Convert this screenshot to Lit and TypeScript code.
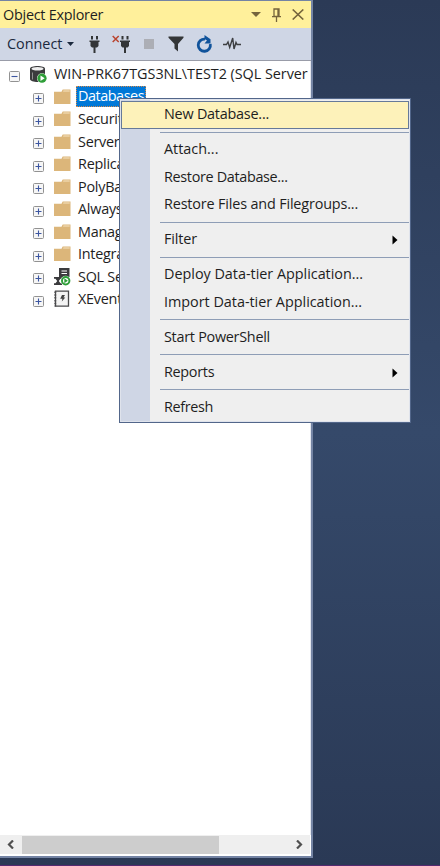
import { LitElement, html, svg, css, nothing } from "lit";
import { customElement } from "lit/decorators.js";
import { styleMap } from "lit/directives/style-map.js";

type Item = { label: string; tracking: number; arrow?: boolean; active?: boolean };

const groups: Item[][] = [
  [{ label: "New Database...", tracking: -0.23, active: true }],
  [
    { label: "Attach...", tracking: 0 },
    { label: "Restore Database...", tracking: -0.33 },
    { label: "Restore Files and Filegroups...", tracking: -0.16 },
  ],
  [{ label: "Filter", tracking: -0.12, arrow: true }],
  [
    { label: "Deploy Data-tier Application...", tracking: -0.02 },
    { label: "Import Data-tier Application...", tracking: -0.02 },
  ],
  [{ label: "Start PowerShell", tracking: -0.27 }],
  [{ label: "Reports", tracking: -0.3, arrow: true }],
  [{ label: "Refresh", tracking: -0.35 }],
];

const nodes = [
  { label: "Databases", icon: "folder", selected: true },
  { label: "Security", icon: "folder" },
  { label: "Server", icon: "folder" },
  { label: "Replica", icon: "folder" },
  { label: "PolyBa", icon: "folder" },
  { label: "Always", icon: "folder" },
  { label: "Manag", icon: "folder" },
  { label: "Integra", icon: "folder" },
  { label: "SQL Se", icon: "agent" },
  { label: "XEvent", icon: "xevent" },
];

const plugShape = svg`<path fill="#333537" d="M2 0h2v3.500H2zM7 0h2v3.500H7zM.5 4.500h10v1.500h-1v4L8 11.500H6.500V17h-2v-5.500H3L1.500 10V6h-1z"/>`;

const icons: Record<string, unknown> = {
  folder: html`<svg width="18" height="16" viewBox="0 0 18 16"><path fill="#dcb67a" d="M0 2.800h7.500l1.200-2.300h7.800v14.500H0z"/><path fill="#f6e3c2" d="M9.500 1.500h6.200v1H9z"/></svg>`,
  agent: html`<svg width="18" height="18" viewBox="0 0 18 18"><path fill="#3b3b3d" d="M5 0h10.500v9H5z"/><path stroke="#fff" stroke-width="1.200" d="M7.500 3h5.500M7.500 5.500h5.500"/><path fill="#3b3b3d" d="M0 9h8v1.800H6.500L4.800 13l1.700 2.200H8V17H0v-1.800h1.500L3.200 13 1.500 10.800H0z"/><circle cx="11.700" cy="12.700" r="5" fill="#fff"/><circle cx="11.700" cy="12.700" r="3.700" fill="#fff" stroke="#2e9e38" stroke-width="2"/><path fill="#2e9e38" d="M10.300 10.200l3.600 2.500-3.600 2.500z"/></svg>`,
  xevent: html`<svg width="18" height="18" viewBox="0 0 18 18"><path fill="#f4f4f4" stroke="#4a4a4c" stroke-width="1.300" d="M1.500 1.200h13v15h-13z"/><path stroke="#4a4a4c" stroke-width="1.800" stroke-dasharray="1.500 1.300" d="M1.300 1.500v15"/><path fill="#444" d="M8 5h3L9.500 7.500h1.800L7.800 11.500l.6-2.800H6.200z"/></svg>`,
  server: html`<svg width="18" height="19" viewBox="0 0 18 19"><path fill="#3b3b3d" d="M0 3.800C0 .2 15 .2 15 3.800V14c0 4-15 4-15 0z"/><ellipse cx="7.500" cy="3.800" rx="6" ry="1.800" fill="#eee"/><path fill="none" stroke="#aaa" stroke-width=".8" d="M2.500 7.500v7"/><circle cx="12" cy="13.200" r="5" fill="#fff"/><circle cx="12" cy="13.200" r="4.600" fill="#2e9e38"/><path fill="#fff" d="M10.500 10.500l4.200 2.700-4.200 2.700z"/></svg>`,
  connect: html`<svg width="11" height="17" viewBox="0 0 11 17">${plugShape}</svg>`,
  disconnect: html`<svg width="19" height="18" viewBox="0 0 19 18"><path stroke="#b9442f" stroke-width="1.500" d="M.7 1l6 6M6.700 1l-6 6"/><g transform="translate(7.500 1)">${plugShape}</g></svg>`,
  stop: html`<svg width="10" height="10"><path fill="#acaeb5" d="M0 0h10v10H0z"/></svg>`,
  filter: html`<svg width="16" height="16" viewBox="0 0 16 16"><path fill="#333537" d="M.5.500h15v1.200L10 8v7.500L6.500 12.500V8L.5 1.700z"/></svg>`,
  refresh: html`<svg width="17" height="18" viewBox="0 0 17 18"><path fill="none" stroke="#10539b" stroke-width="2.800" d="M9 4.100A6.100 6.100 0 1 0 14.300 9"/><path fill="#10539b" d="M8.500 0l6 4.300v4.200H8.500l2.500-3-2.500-1.500z"/></svg>`,
  activity: html`<svg width="18" height="14" viewBox="0 0 18 14"><path fill="none" stroke="#3d3f42" stroke-width="1.400" d="M0 7.500h3.500L5 5l1.700 5.500L9.700 1l1.300 11L13 5.500l1 2h4"/></svg>`,
};

const box = (open: boolean) => html`<svg class="box" width="11" height="11" viewBox="0 0 11 11">
  <rect x=".5" y=".5" width="10" height="10" rx="1" fill="#f6f6f6" stroke="#929292" />
  <path stroke="#3c56a0" stroke-width="1.100" d=${open ? "M2.500 5.500h6" : "M2.500 5.500h6M5.500 2.500v6"} />
</svg>`;

@customElement("context-menu")
export class ContextMenu extends LitElement {
  static styles = css`
    :host { display: block; box-sizing: border-box; width: 292px; height: 325px; border: 1px solid #52668a;
      background: linear-gradient(90deg, #cfd6e5 0 30px, #efefef 30px); padding: 2px 1px 0 1px;
      box-shadow: inset 0 0 0 1px #dfe3ec; }
    .item { display: flex; align-items: center; box-sizing: border-box; height: 27.500px; padding: 0 10px 1px 42px; white-space: nowrap; border: 1px solid transparent; }
    .active { background: #fdf2ba; border-color: #667a99; }
    .sep { height: 7.500px; display: flex; align-items: center; padding-left: 39px; }
    .line { height: 1px; flex: 1; background: #8e9db6; }
    .arrow { margin-left: auto; width: 6px; height: 10px; fill: #000; position: relative; top: 1px; }
  `;
  render() {
    return groups.map((g, i) => html`
      ${i ? html`<div class="sep"><div class="line"></div></div>` : nothing}
      ${g.map((it) => html`<div class="item ${it.active ? "active" : ""}">
        <span style=${styleMap({ letterSpacing: `${it.tracking}px` })}>${it.label}</span>
        ${it.arrow ? html`<svg class="arrow" viewBox="0 0 6 10"><path d="M.5.500L5.500 5 .5 9.500z" /></svg>` : nothing}
      </div>`)}`);
  }
}

@customElement("app-root")
export class AppRoot extends LitElement {
  static styles = css`
    :host { display: block; position: relative; box-sizing: border-box; width: 440px; height: 866px; overflow: hidden;
      font: 14.400px/20px "Open Sans", "Noto Sans", sans-serif; letter-spacing: -0.25px; color: #1e1e1e;
      background: linear-gradient(180deg, #2b3a56 0, #35496a 50%, #2a3955 100%); border-bottom: 1px solid #55296f; }
    .panel { box-sizing: border-box; width: 313px; height: 858px; display: flex; flex-direction: column; background: #fff;
      border: solid #7484a4; border-width: 1px 2px 2px 0; }
    .title { flex: none; height: 27px; display: flex; align-items: center; background: #fff09b; padding: 0 7px 0 3px; box-sizing: border-box; }
    .buttons { margin-left: auto; display: flex; align-items: center; gap: 11px; }
    .tools { flex: none; box-sizing: border-box; height: 33px; display: flex; align-items: center; background: #cfd6e5; border-bottom: 1px solid #999ca8; padding-left: 7px; color: #1b293e; }
    .name { width: 60px; letter-spacing: 0; }
    .caret { margin: 0 15px 0 0; }
    .connect { margin-right: 12px; }
    .disconnect { margin-right: 13px; }
    .stop { margin-right: 14px; }
    .filter { margin-right: 12px; }
    .refresh { margin-right: 10px; }
    .tools svg, .title svg, .row svg { display: block; flex: none; }
    .tree { flex: 1; overflow: hidden; padding-top: 2px; border-right: 1px solid #e3e6ee; }
    .row { height: 22.500px; display: flex; align-items: center; white-space: nowrap; padding-left: 33px; }
    .root { padding-left: 9px; letter-spacing: -0.04px; }
    .box { margin-top: 4px; }
    .icon { width: 18px; margin: 0 4px 0 10px; }
    .label { padding: 0 2px; height: 20px; line-height: 19px; }
    .selected { background: #0078d7; color: #fff; outline: 1px dotted #d98a4a; outline-offset: -1px; height: 21px; line-height: 20px; letter-spacing: -0.45px; }
    .scroll { flex: none; height: 19px; margin: 0 1px 2px 0; display: flex; background: #efefef; align-items: center; }
    .thumb { width: 197px; height: 18px; background: #cdcdcd; margin: 0 77px 0 9px; }
    .scroll svg { fill: none; stroke: #505050; stroke-width: 2.200; }
    .scroll .left { margin-left: 7px; margin-right: -1px; }
    context-menu { position: absolute; left: 119px; top: 98px; }
  `;
  render() {
    return html`<div class="panel">
        <div class="title"><span>Object Explorer</span>
          <div class="buttons">
            <svg width="10" height="5"><path fill="#75643c" d="M0 0h10L5 5z" /></svg>
            <svg width="9" height="14" viewBox="0 0 9 14"><path fill="none" stroke="#75643c" stroke-width="1.300" d="M2 1h5v7.500H2zM0 8.700h9M4.500 9v5M6 1v7" /></svg>
            <svg width="12" height="11" viewBox="0 0 12 11"><path stroke="#75643c" stroke-width="1.600" d="M.7.500l10.600 10M11.300.500L.7 10.500" /></svg>
          </div>
        </div>
        <div class="tools"><span class="name">Connect</span>
          <svg class="caret" width="7" height="4"><path fill="#1b293e" d="M0 0h7L3.500 4z" /></svg>
          ${["connect", "disconnect", "stop", "filter", "refresh", "activity"].map((n) => html`<div class=${n}>${icons[n]}</div>`)}
        </div>
        <div class="tree">
          <div class="row root">${box(true)}<div class="icon">${icons.server}</div><span class="label">WIN-PRK67TGS3NL\\TEST2 (SQL Server</span></div>
          ${nodes.map((n) => html`<div class="row">${box(false)}<div class="icon">${icons[n.icon]}</div><span class="label ${n.selected ? "selected" : ""}">${n.label}</span></div>`)}
        </div>
        <div class="scroll">
          <svg class="left" width="7" height="9"><path d="M6 .5L2 4.500l4 4" /></svg>
          <div class="thumb"></div>
          <svg width="7" height="9"><path d="M1 .5l4 4-4 4" /></svg>
        </div>
      </div>
      <context-menu></context-menu>`;
  }
}
